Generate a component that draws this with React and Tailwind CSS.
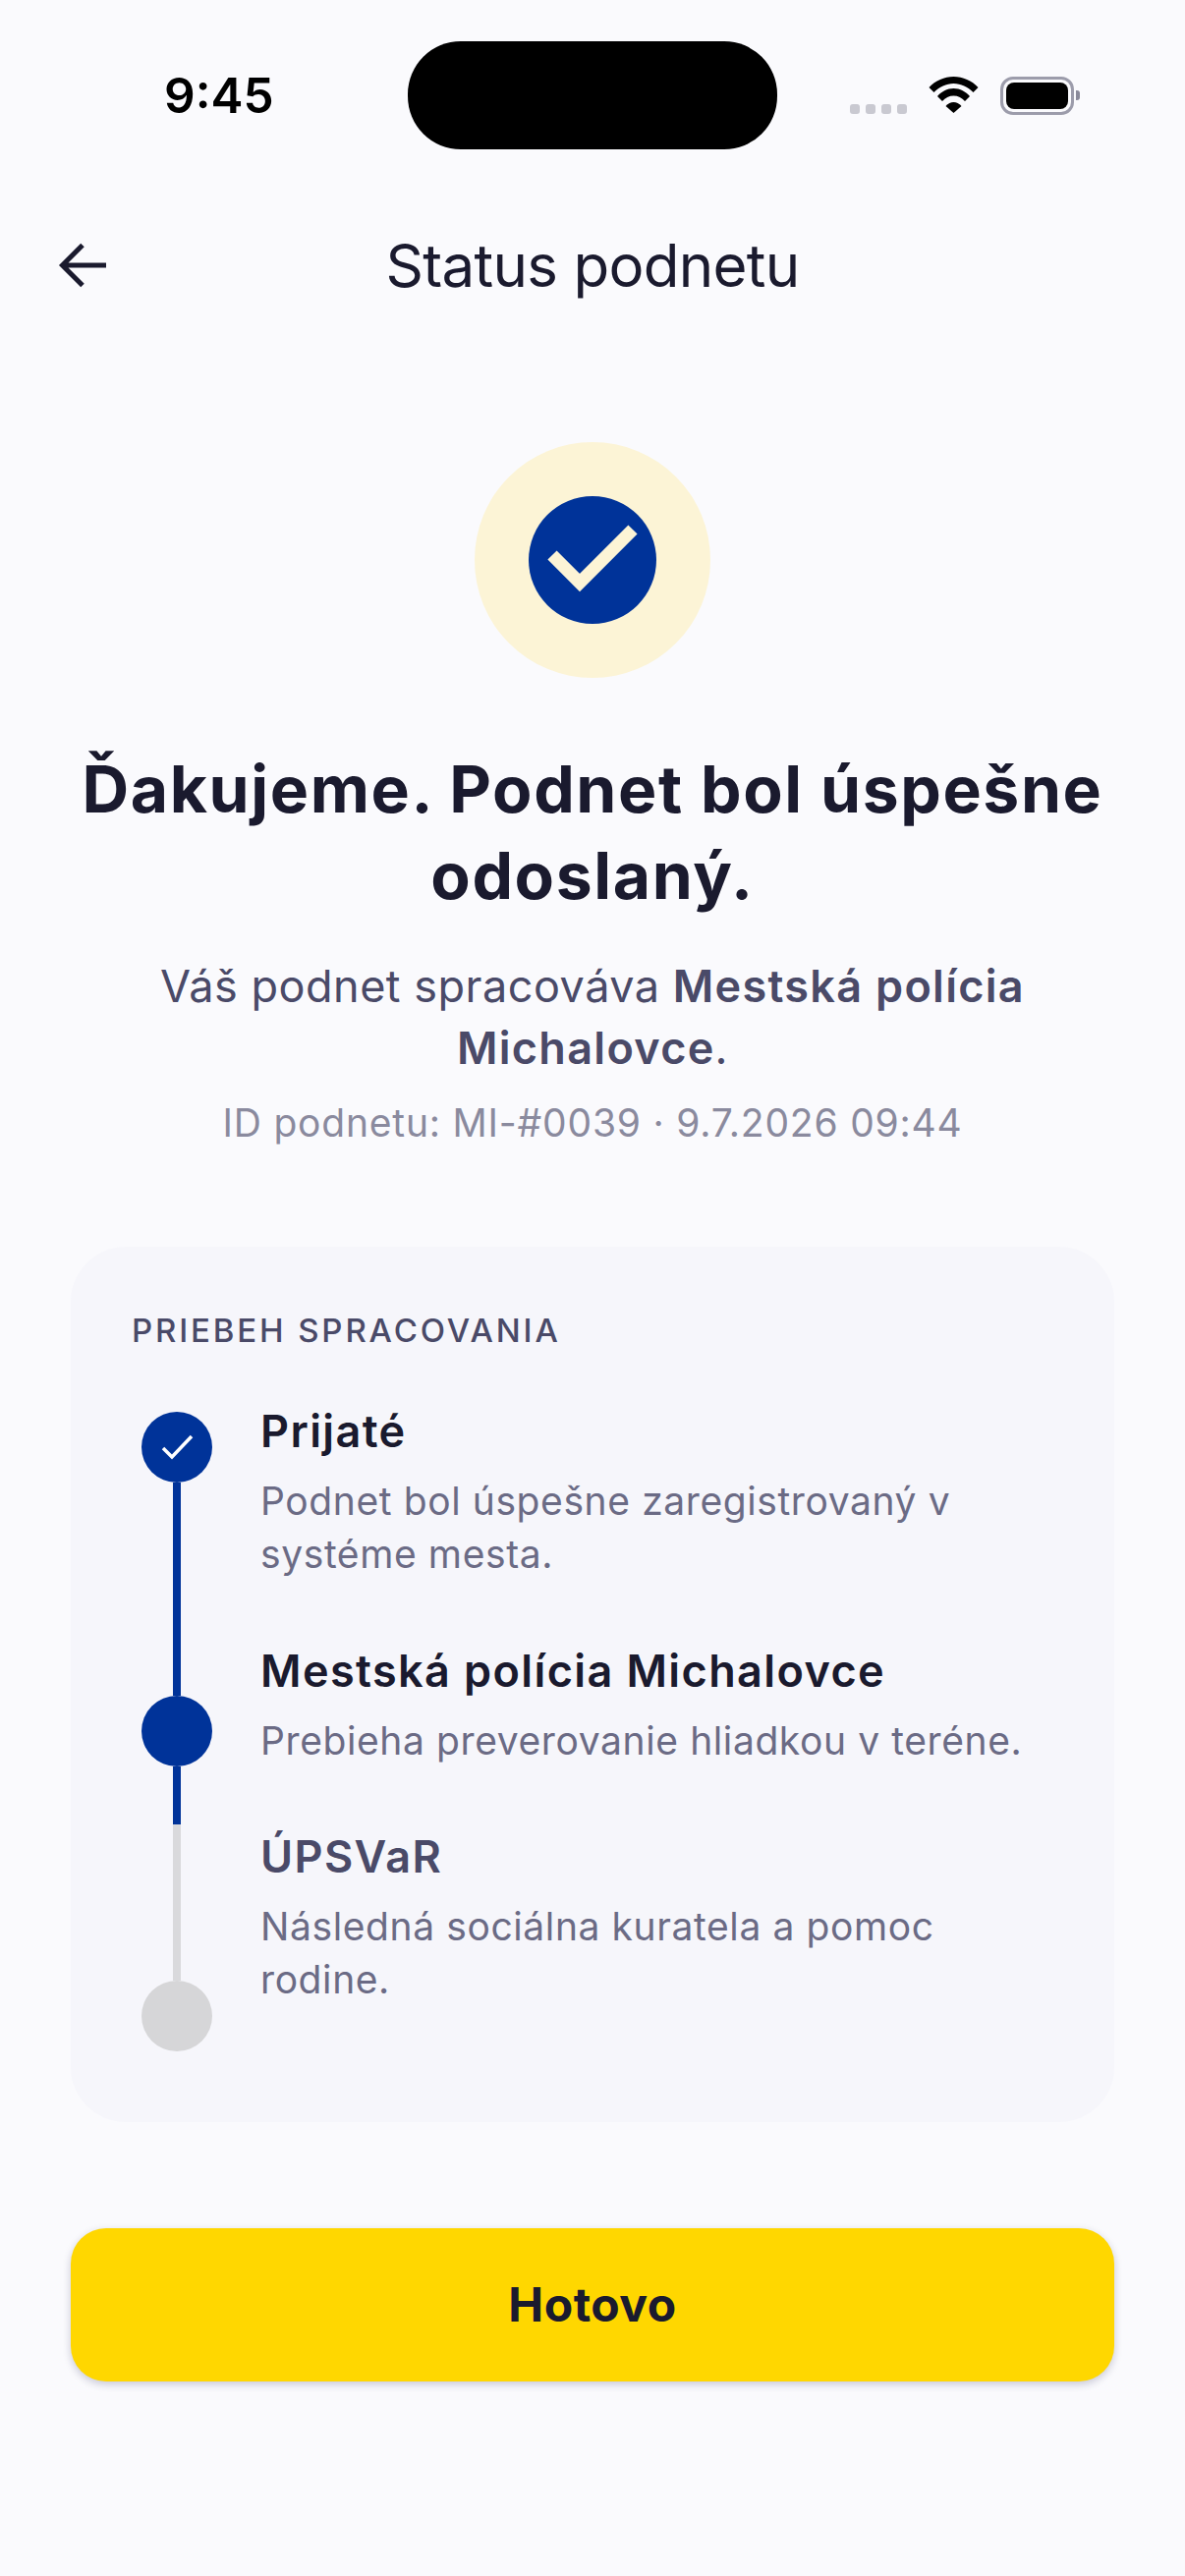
const STEPS = [
   {
      title: "Prijaté",
      text: ["Podnet bol úspešne zaregistrovaný v", "systéme mesta."],
      titleClass: "text-[#1a1a2e]",
   },
   {
      title: "Mestská polícia Michalovce",
      text: ["Prebieha preverovanie hliadkou v teréne."],
      titleClass: "text-[#1a1a2e]",
   },
   {
      title: "ÚPSVaR",
      text: ["Následná sociálna kuratela a pomoc", "rodine."],
      titleClass: "text-[#4a4a68]",
   },
];

function StatusBar() {
   return (
      <div className="flex h-[110px] items-center pl-[167px] pr-[106px]">
         <span className="w-[248px] text-left text-[49.5px] leading-[56px] font-semibold text-black">
            9:45
         </span>
         <div className="h-[110px] w-[376px] rounded-[54px] bg-black" />
         <div className="ml-[74px] flex items-end gap-[6px] pt-[28px]">
            {[0, 1, 2, 3].map((i) => (
               <span
                  key={i}
                  className="h-[10px] w-[10px] rounded-[3px] bg-[#c9c9d1]"
               />
            ))}
         </div>
         <svg width="52" height="38" viewBox="0 0 52 38" className="ml-[22px]">
            <path d="M0.5 11C7 4 16 0 25.5 0C35 0 44 4 50.5 11L45.5 16C40 10.5 33 7 25.5 7C18 7 11 10.5 5.5 16Z" fill="#000" />
            <path d="M9 20C13 15.5 19 12 25.5 12C32 12 38 15.5 42 20L37 25C34 21.5 30 19.5 25.5 19.5C21 19.5 17 21.5 14 25Z" fill="#000" />
            <path d="M17.5 30C20 27.5 22.5 26 25.5 26C28.5 26 31 27.5 33.5 30L25.5 37Z" fill="#000" />
         </svg>
         <div className="relative ml-[21px] flex h-[39px] w-[75px] items-center justify-center rounded-[13px] border-[3px] border-[#9c9cab]">
            <div className="h-[27px] w-[63px] rounded-[8px] bg-black" />
            <span className="absolute right-[-9px] h-[10px] w-[4px] rounded-r-[3px] bg-[#8a8a9a]" />
         </div>
      </div>
   );
}

function App() {
   return (
      <div
         className="flex min-h-[2622px] flex-col bg-[#fafafd] pt-[42px] text-center text-[#1a1a2e] [font-optical-sizing:none]"
         style={{ fontFamily: "Inter, sans-serif" }}
      >
         <StatusBar />

         <header className="mt-[88px] flex h-[60px] items-center justify-between px-[58px]">
            <svg width="52" height="52" viewBox="0 0 52 52" fill="none" stroke="#1a1a2e" strokeWidth="5">
               <path d="M50 26H6M26 5.5L5.5 26L26 46.5" />
            </svg>
            <h1 className="text-[60px] leading-[60px] font-normal tracking-[-0.7px]">
               Status podnetu
            </h1>
            <span className="w-[52px]" />
         </header>

         <div className="mx-auto mt-[150px] flex h-[240px] w-[240px] items-center justify-center rounded-full bg-[#fcf4d6]">
            <svg width="130" height="130" viewBox="0 0 130 130">
               <circle cx="65" cy="65" r="65" fill="#003399" />
               <path d="M24 60l28 28 54-54" fill="none" stroke="#fcf4d6" strokeWidth="13" />
            </svg>
         </div>

         <h2 className="mt-[69px] text-[66px] leading-[88px] font-bold tracking-[1.6px]">
            Ďakujeme. Podnet bol úspešne
            <br />
            odoslaný.
         </h2>

         <p className="mt-[37px] text-[45px] leading-[63px] tracking-[0.5px] text-[#4a4a68]">
            Váš podnet spracováva{" "}
            <strong className="font-semibold tracking-[1.3px]">Mestská polícia</strong>
            <br />
            <strong className="font-semibold tracking-[1.3px]">Michalovce</strong>.
         </p>
         <p className="mt-[17px] text-[39px] leading-[56px] tracking-[0.8px] text-[#8a8a9e]">
            ID podnetu: MI-#0039 · 9.7.2026 09:44
         </p>

         <section className="mx-[72px] mt-[98px] rounded-[56px] bg-[#f6f6fb] pt-[65px] pr-[40px] pb-[72px] pl-[62px] text-left">
            <h3 className="text-[33px] leading-[40px] font-medium tracking-[2.85px] text-[#4a4a68]">
               PRIEBEH SPRACOVANIA
            </h3>

            <div className="mt-[63px] flex">
               <div className="ml-[10px] flex w-[72px] flex-col items-center">
                  <div className="flex h-[72px] w-[72px] items-center justify-center rounded-full bg-[#003399]">
                     <svg width="72" height="72" viewBox="0 0 72 72" fill="none" stroke="#fff" strokeWidth="3.5">
                        <path d="M22 37l9 9 20-21" />
                     </svg>
                  </div>
                  <div className="h-[217px] w-[8px] bg-[#003399]" />
                  <div className="h-[72px] w-[72px] rounded-full bg-[#003399]" />
                  <div className="flex h-[218px] w-[8px] flex-col bg-[#d9d9dc]">
                     <div className="h-[59px] bg-[#003399]" />
                  </div>
                  <div className="h-[72px] w-[72px] rounded-full bg-[#d6d6d8]" />
               </div>

               <div className="ml-[49px] flex flex-1 flex-col gap-[71.5px]">
                  {STEPS.map((step) => (
                     <div key={step.title}>
                        <h4 className={`text-[45px] leading-[40px] font-semibold tracking-[1.4px] ${step.titleClass}`}>
                           {step.title}
                        </h4>
                        <div className="mt-[24px] text-[39px] leading-[54px] tracking-[0.6px] text-[#6b6b85]">
                           {step.text.map((line) => (
                              <p key={line}>{line}</p>
                           ))}
                        </div>
                     </div>
                  ))}
               </div>
            </div>
         </section>

         <button className="mx-[72px] mt-[108px] h-[156px] rounded-[36px] bg-[#ffd700] text-[48px] font-bold tracking-[0.5px] text-[#1a1a2e] shadow-[0_3px_9px_rgba(0,0,60,0.2)]">
            Hotovo
         </button>
      </div>
   );
}

export default App;
